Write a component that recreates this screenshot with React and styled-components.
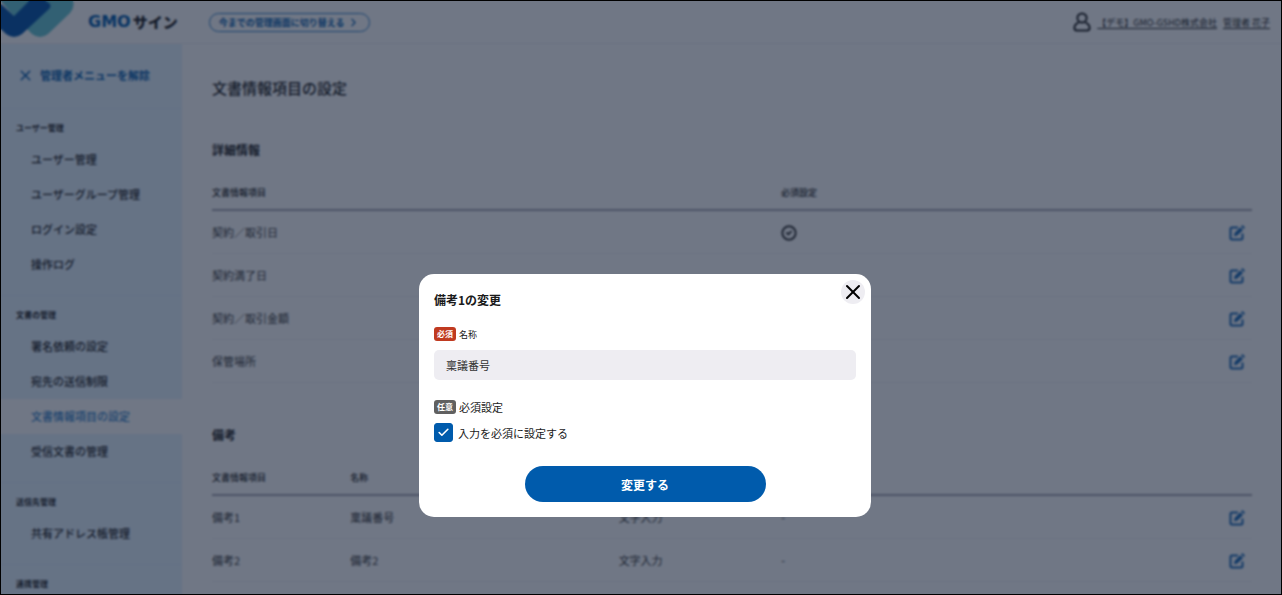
import { useState } from "react";
import styled, { createGlobalStyle } from "styled-components";
import { Check, CircleCheck, ChevronRight, X } from "lucide-react";

const GlobalStyle = createGlobalStyle`
  *{
    box-sizing: border-box;
  }
  body{
    margin: 0;
    background-color: #fff;
    color: #1a1a1a;
    font-family: "Noto Sans CJK JP", "Noto Sans", sans-serif;
    font-size: 11px;
  }
  h1, h2, h3, p, ul{
    margin: 0;
    padding: 0;
  }
  ul{
    list-style: none;
  }
  button, input{
    font-family: inherit;
  }
`;

const Frame = styled.div`
  position: relative;
  height: 100vh;
  overflow: hidden;
  border: 1px solid #000;
`;

const Header = styled.header`
  display: flex;
  align-items: center;
  height: 43px;
  padding-right: 11px;
  border-bottom: 1px solid #f0f0f4;
`;

const Mark = styled.svg`
  align-self: flex-start;
  width: 74px;
  height: 38px;
  margin-right: 13px;
`;

const Logo = styled.a`
  display: flex;
  align-items: center;
  gap: 2px;
  color: #1a1a1a;
  font-size: 15px;
  font-weight: 900;
  line-height: 20px;
  text-decoration: none;
  span{
    color: #005bac;
    font-family: "DejaVu Sans", sans-serif;
    font-size: 16px;
    font-weight: 700;
  }
`;

const SwitchButton = styled.button`
  display: flex;
  align-items: center;
  gap: 3px;
  height: 19px;
  margin-left: 31px;
  padding: 0 9px;
  border: 1px solid #2f80c8;
  border-radius: 10px;
  background: none;
  color: #005bac;
  font-size: 9px;
  font-weight: 700;
  white-space: nowrap;
`;

const Account = styled.a`
  display: flex;
  align-items: center;
  gap: 6px;
  margin-left: auto;
  color: #1a1a1a;
  font-size: 9px;
  white-space: nowrap;
  text-decoration: none;
  span{
    text-decoration: underline;
    text-underline-offset: 2px;
  }
`;

const Body = styled.div`
  display: flex;
`;

const Sidebar = styled.nav`
  flex: 0 0 181px;
  min-height: 100vh;
  padding-top: 21px;
  background-color: #e6f4ff;
`;

const ReleaseButton = styled.button`
  display: flex;
  align-items: center;
  gap: 6px;
  height: 20px;
  margin: 0 0 23px 16px;
  padding: 0;
  border: 0;
  background: none;
  color: #005bac;
  font-size: 11px;
  font-weight: 700;
`;

const MenuGroup = styled.section`
  padding: 7px 0 13px;
  border-top: 1px solid #e0effb;
  h3{
    margin-bottom: 2px;
    padding-left: 15px;
    font-size: 8px;
    font-weight: 700;
    line-height: 24px;
  }
`;

const MenuLink = styled.a`
  display: block;
  padding-left: 30px;
  background-color: ${(props) => (props.$active ? "#fff" : "transparent")};
  color: ${(props) => (props.$active ? "#2f80c8" : "#1a1a1a")};
  font-weight: 500;
  line-height: 35px;
  text-decoration: none;
`;

const Main = styled.main`
  flex: 1;
  padding: 22px 29px 0 30px;
`;

const PageTitle = styled.h1`
  margin-bottom: 30px;
  font-size: 15px;
  font-weight: 500;
  line-height: 44px;
`;

const TableSection = styled.section`
  margin-bottom: 42px;
  h2{
    margin-bottom: 16px;
    font-size: 12px;
    font-weight: 700;
    line-height: 20px;
  }
`;

const Table = styled.table`
  width: 100%;
  table-layout: fixed;
  border-spacing: 0;
  th, td{
    padding: 0;
    text-align: left;
  }
  th{
    height: 35px;
    border-bottom: 2px solid #a6a6b0;
    font-size: 9px;
    font-weight: 500;
  }
  td{
    height: 43px;
    border-bottom: 1px solid #f2f2f6;
    color: #333;
  }
  td:last-child{
    padding-right: 7px;
    text-align: right;
  }
  svg{
    display: inline-block;
    vertical-align: middle;
  }
`;

const Col = styled.col`
  width: ${(props) => props.$width};
`;

const EditButton = styled.button`
  height: 20px;
  padding: 0;
  border: 0;
  background: none;
  color: #1667b5;
  line-height: 16px;
  vertical-align: middle;
`;

const Overlay = styled.div`
  position: absolute;
  inset: 0;
  display: flex;
  align-items: flex-start;
  justify-content: center;
  padding: 273px 0 0 8px;
  background-color: rgba(17, 28, 52, 0.6);
  backdrop-filter: blur(1px);
`;

const Modal = styled.form`
  position: relative;
  width: 452px;
  max-width: 100%;
  padding: 15px;
  border-radius: 15px;
  background-color: #fff;
  h2{
    margin-bottom: 16px;
    font-size: 12px;
    font-weight: 700;
    line-height: 22px;
  }
`;

const CloseButton = styled.button`
  position: absolute;
  top: 6px;
  right: 6px;
  display: flex;
  align-items: center;
  justify-content: center;
  width: 24px;
  height: 24px;
  padding: 0;
  border: 0;
  border-radius: 50%;
  background-color: #eeedf2;
  color: #000;
`;

const FieldLabel = styled.label`
  display: flex;
  align-items: center;
  gap: 3px;
  height: 14px;
  margin-bottom: 9px;
  font-size: ${(props) => (props.$small ? "9px" : "11px")};
`;

const Badge = styled.span`
  width: 22px;
  border-radius: 3px;
  background-color: ${(props) => (props.$required ? "#c03a20" : "#606060")};
  color: #fff;
  font-size: 8px;
  font-weight: 700;
  line-height: 14px;
  text-align: center;
`;

const TextInput = styled.input`
  display: block;
  width: 100%;
  height: 30px;
  margin-bottom: 20px;
  padding: 0 12px;
  border: 0;
  border-radius: 5px;
  background-color: #eeedf2;
  color: #333;
  font-size: 11px;
`;

const CheckLabel = styled.label`
  display: flex;
  align-items: center;
  gap: 5px;
  height: 19px;
`;

const CheckBox = styled.span`
  display: grid;
  place-items: center;
  input, svg{
    grid-area: 1 / 1;
  }
  input{
    width: 19px;
    height: 19px;
    margin: 0;
    border: 1px solid #005bac;
    border-radius: 3px;
    appearance: none;
  }
  input:checked{
    background-color: #005bac;
  }
  svg{
    color: #fff;
    pointer-events: none;
  }
`;

const SubmitButton = styled.button`
  display: block;
  width: 241px;
  height: 36px;
  margin: 24px auto 0;
  border: 0;
  border-radius: 18px;
  background-color: #005bac;
  color: #fff;
  font-size: 12px;
  font-weight: 700;
`;

const menu = [
    { title: "ユーザー管理", items: ["ユーザー管理", "ユーザーグループ管理", "ログイン設定", "操作ログ"] },
    { title: "文書の管理", items: ["署名依頼の設定", "宛先の送信制限", "文書情報項目の設定", "受信文書の管理"] },
    { title: "送信先管理", items: ["共有アドレス帳管理"] },
    { title: "連携管理", items: [] },
];

const details = [
    { name: "契約／取引日", required: true },
    { name: "契約満了日" },
    { name: "契約／取引金額" },
    { name: "保管場所" },
];

const notes = [
    { item: "備考1", name: "稟議番号", type: "文字入力" },
    { item: "備考2", name: "備考2", type: "文字入力" },
];

function UserIcon(){
    return(
        <svg width="18" height="20" viewBox="0 0 18 20" fill="none" stroke="currentColor" strokeWidth="2">
            <circle cx="9" cy="6" r="4.6" />
            <path d="M5.6 10.6C3 11.6 1.4 13.6 1.4 16c0 1.600 1 2.400 2.400 2.400h10.400c1.400 0 2.400-.8 2.400-2.400 0-2.400-1.600-4.400-4.200-5.400" />
        </svg>
    )
}

function Edit({ name }){
    return(
        <EditButton type="button" aria-label={name}>
            <svg width="16" height="16" viewBox="0 0 16 16">
                <path d="M9 2.500H3Q1.500 2.500 1.500 4V13Q1.500 14.500 3 14.500H12Q13.500 14.500 13.500 13V8.500" fill="none" stroke="currentColor" strokeWidth="2" />
                <path d="M5 11.200L5.600 7.900L11.300 2.200L14 4.900L8.300 10.600ZM12.100 1.400L12.900.6Q13.500 0 14.100.6L15.500 2Q16.100 2.600 15.500 3.200L14.800 4Z" fill="currentColor" />
            </svg>
        </EditButton>
    )
}

export default function App(){
    const [name, setName] = useState("稟議番号");
    const [required, setRequired] = useState(true);

    return(
        <>
            <GlobalStyle />
            <Frame>
                <Header>
                    <Mark viewBox="0 0 74 38" aria-hidden="true">
                        <path d="M0 0H72Q74 6 69 12L47 33Q39 39 31 33L10 12Z" fill="#64c5d2" />
                        <path d="M0 3L13 15L28 0H44L48 2Q51 5 48 8L21 33Q13 39 5 33L0 28Z" fill="#0052a8" />
                    </Mark>
                    <Logo href="#"><span>GMO</span>サイン</Logo>
                    <SwitchButton type="button">
                        今までの管理画面に切り替える
                        <ChevronRight size={13} />
                    </SwitchButton>
                    <Account href="#">
                        <UserIcon />
                        <span>【デモ】GMO-GSHD株式会社</span>
                        <span>管理者 花子</span>
                    </Account>
                </Header>
                <Body>
                    <Sidebar>
                        <ReleaseButton type="button">
                            <X size={17} strokeWidth={2} />
                            管理者メニューを解除
                        </ReleaseButton>
                        {menu.map((group) => (
                            <MenuGroup key={group.title}>
                                <h3>{group.title}</h3>
                                <ul>
                                    {group.items.map((item) => (
                                        <li key={item}>
                                            <MenuLink href="#" $active={item === "文書情報項目の設定"}>{item}</MenuLink>
                                        </li>
                                    ))}
                                </ul>
                            </MenuGroup>
                        ))}
                    </Sidebar>
                    <Main>
                        <PageTitle>文書情報項目の設定</PageTitle>
                        <TableSection>
                            <h2>詳細情報</h2>
                            <Table>
                                <colgroup>
                                    <Col $width="54.7%" />
                                    <Col />
                                    <Col $width="60px" />
                                </colgroup>
                                <thead>
                                    <tr>
                                        <th>文書情報項目</th>
                                        <th>必須設定</th>
                                        <th></th>
                                    </tr>
                                </thead>
                                <tbody>
                                    {details.map((row) => (
                                        <tr key={row.name}>
                                            <td>{row.name}</td>
                                            <td>{row.required && <CircleCheck size={16} strokeWidth={3} />}</td>
                                            <td><Edit name={row.name} /></td>
                                        </tr>
                                    ))}
                                </tbody>
                            </Table>
                        </TableSection>
                        <TableSection>
                            <h2>備考</h2>
                            <Table>
                                <colgroup>
                                    <Col $width="13.3%" />
                                    <Col $width="25.8%" />
                                    <Col />
                                    <Col $width="39.5%" />
                                    <Col $width="60px" />
                                </colgroup>
                                <thead>
                                    <tr>
                                        <th>文書情報項目</th>
                                        <th>名称</th>
                                        <th></th>
                                        <th></th>
                                        <th></th>
                                    </tr>
                                </thead>
                                <tbody>
                                    {notes.map((row) => (
                                        <tr key={row.item}>
                                            <td>{row.item}</td>
                                            <td>{row.name}</td>
                                            <td>{row.type}</td>
                                            <td>-</td>
                                            <td><Edit name={row.item} /></td>
                                        </tr>
                                    ))}
                                </tbody>
                            </Table>
                        </TableSection>
                    </Main>
                </Body>
                <Overlay>
                    <Modal onSubmit={(ev) => ev.preventDefault()}>
                        <CloseButton type="button" aria-label="閉じる">
                            <X size={24} strokeWidth={2} />
                        </CloseButton>
                        <h2>備考1の変更</h2>
                        <FieldLabel htmlFor="name" $small>
                            <Badge $required>必須</Badge>
                            名称
                        </FieldLabel>
                        <TextInput
                            id="name"
                            type="text"
                            value={name}
                            onChange={(ev) => setName(ev.target.value)}/>
                        <FieldLabel htmlFor="required">
                            <Badge>任意</Badge>
                            必須設定
                        </FieldLabel>
                        <CheckLabel>
                            <CheckBox>
                                <input
                                    id="required"
                                    type="checkbox"
                                    checked={required}
                                    onChange={(ev) => setRequired(ev.target.checked)}/>
                                <Check size={13} strokeWidth={3} />
                            </CheckBox>
                            入力を必須に設定する
                        </CheckLabel>
                        <SubmitButton type="submit">変更する</SubmitButton>
                    </Modal>
                </Overlay>
            </Frame>
        </>
    )
}
